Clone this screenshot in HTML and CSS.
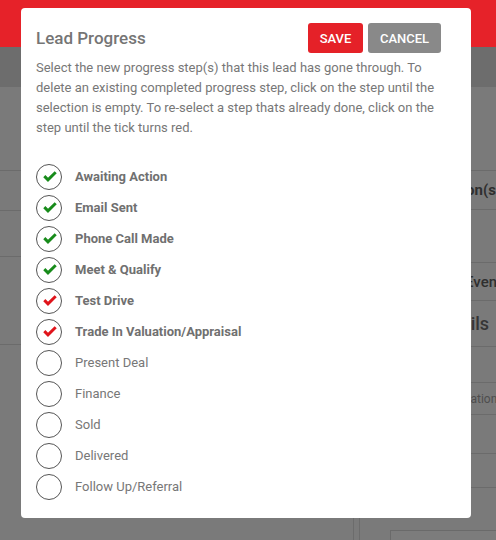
FILE: index.html
```html
<!DOCTYPE html>
<html>
<head>
<meta charset="utf-8">
<link rel="stylesheet" href="styles.css">
</head>
<body>
<div class="page">
  <div class="topbar"></div>
  <div class="subbar"></div>
  <div class="main">
    <div class="leftcol">
      <div class="lrow h84"></div>
      <div class="lrow h40"></div>
      <div class="lrow h46"></div>
      <div class="lrow h88"></div>
    </div>
    <div class="rightcol">
      <div class="rrow h84"></div>
      <div class="rrow h39 t-bold"><span class="txt s1">Next Action(s)</span></div>
      <div class="rrow h53"></div>
      <div class="rrow h38 t-med"><span class="txt s2">Upcoming Events</span></div>
      <div class="rrow h46 t-big"><span class="txt s3">Vehicle Details</span></div>
      <div class="rrow h36"></div>
      <div class="rrow h32 t-small"><span class="txt s4">Trade In Valuation</span></div>
      <div class="rrow h39"></div>
      <div class="rrow h34"></div>
      <div class="rbox"></div>
    </div>
  </div>
</div>

<div class="modal">
  <div class="modal-head">
    <h2 class="title">Lead Progress</h2>
    <div class="actions">
      <button class="btn btn-save">SAVE</button>
      <button class="btn btn-cancel">CANCEL</button>
    </div>
  </div>
  <p class="intro">Select the new progress step(s) that this lead has gone through. To delete an existing completed progress step, click on the step until the selection is empty. To re-select a step thats already done, click on the step until the tick turns red.</p>
  <ul class="steps">
    <li class="step done"><span class="ring"><svg class="tick green" viewBox="0 0 14 11" width="14" height="11"><path d="M1.3 5.2 L5 8.8 L12.7 1.3"/></svg></span><span class="label">Awaiting Action</span></li>
    <li class="step done"><span class="ring"><svg class="tick green" viewBox="0 0 14 11" width="14" height="11"><path d="M1.3 5.2 L5 8.8 L12.7 1.3"/></svg></span><span class="label">Email Sent</span></li>
    <li class="step done"><span class="ring"><svg class="tick green" viewBox="0 0 14 11" width="14" height="11"><path d="M1.3 5.2 L5 8.8 L12.7 1.3"/></svg></span><span class="label">Phone Call Made</span></li>
    <li class="step done"><span class="ring"><svg class="tick green" viewBox="0 0 14 11" width="14" height="11"><path d="M1.3 5.2 L5 8.8 L12.7 1.3"/></svg></span><span class="label">Meet &amp; Qualify</span></li>
    <li class="step done"><span class="ring"><svg class="tick red" viewBox="0 0 14 11" width="14" height="11"><path d="M1.3 5.2 L5 8.8 L12.7 1.3"/></svg></span><span class="label">Test Drive</span></li>
    <li class="step done"><span class="ring"><svg class="tick red" viewBox="0 0 14 11" width="14" height="11"><path d="M1.3 5.2 L5 8.8 L12.7 1.3"/></svg></span><span class="label">Trade In Valuation/Appraisal</span></li>
    <li class="step"><span class="ring"></span><span class="label">Present Deal</span></li>
    <li class="step"><span class="ring"></span><span class="label">Finance</span></li>
    <li class="step"><span class="ring"></span><span class="label">Sold</span></li>
    <li class="step"><span class="ring"></span><span class="label">Delivered</span></li>
    <li class="step"><span class="ring"></span><span class="label">Follow Up/Referral</span></li>
  </ul>
</div>
</body>
</html>
```

FILE: styles.css
```css
* { box-sizing: border-box; }
html, body { margin: 0; padding: 0; }
body {
  width: 496px;
  height: 540px;
  overflow: hidden;
  background: #7a7a7a;
  font-family: Roboto, "Liberation Sans", Arial, sans-serif;
  position: relative;
}
.page { display: flex; flex-direction: column; height: 540px; }
.topbar { height: 47px; background: #e62229; flex: none; }
.subbar { height: 40px; background: #6d6d6d; flex: none; }
.main { flex: 1; display: flex; min-width: 0; }
.leftcol { width: 354px; flex: none; border-right: 1px solid #6c6c6c; margin-right: 5px; }
.rightcol { flex: 1; min-width: 0; border-left: 1px solid #6c6c6c; overflow: hidden; }
.lrow, .rrow { border-bottom: 1px solid #6b6b6b; display: flex; align-items: center; white-space: nowrap; overflow: hidden; }
.h32 { height: 32px; } .h34 { height: 34px; } .h36 { height: 36px; } .h38 { height: 38px; }
.h39 { height: 39px; } .h40 { height: 40px; } .h46 { height: 46px; } .h53 { height: 53px; }
.h84 { height: 84px; } .h88 { height: 88px; }
.txt { display: block; }
.t-bold { font-weight: 700; font-size: 15px; color: #2f2f2f; }
.t-med { font-weight: 500; font-size: 15px; color: #2f2f2f; }
.t-big { font-weight: 500; font-size: 18px; color: #363636; }
.t-small { font-weight: 400; font-size: 12px; color: #4e4e4e; }
.s1 { padding-left: 44px; }
.s2 { padding-left: 33px; }
.s3 { padding-left: 10px; }
.s4 { padding-left: 41px; }
.rbox { margin: 42px 0 0 30px; height: 20px; border: 1px solid #6a6a6a; border-right: none; background: #7c7c7c; }

.modal {
  position: absolute;
  left: 21px;
  top: 8px;
  width: 450px;
  height: 510px;
  background: #fff;
  border-radius: 4px;
  padding: 15px 15px 0 15px;
}
.modal-head { display: flex; align-items: center; height: 30px; }
.title {
  flex: 1;
  margin: 0;
  font-size: 17px;
  font-weight: 500;
  color: #757575;
  line-height: 30px;
}
.actions { display: flex; gap: 5px; margin-right: 15px; }
.btn {
  height: 30px;
  border: none;
  border-radius: 3px;
  color: #fff;
  font-family: Roboto, "Liberation Sans", Arial, sans-serif;
  font-size: 13px;
  font-weight: 500;
  padding: 0;
}
.btn-save { width: 55px; background: #e52128; }
.btn-cancel { width: 73px; background: #898989; }
.intro {
  margin: 5px 0 0 0;
  font-size: 13px;
  line-height: 20px;
  color: #777;
}
.steps { list-style: none; margin: 23px 0 0 0; padding: 0; }
.step { height: 31px; display: flex; align-items: center; }
.ring {
  width: 26px;
  height: 26px;
  border: 1px solid #555;
  border-radius: 50%;
  display: flex;
  align-items: center;
  justify-content: center;
  flex: none;
}
.tick { fill: none; stroke-width: 3; margin-left: 1px; }
.tick.green { stroke: #178b1a; }
.tick.red { stroke: #e0141b; }
.label { margin-left: 13px; font-size: 13px; color: #777; }
.step.done .label { font-weight: 700; color: #707070; }
```
